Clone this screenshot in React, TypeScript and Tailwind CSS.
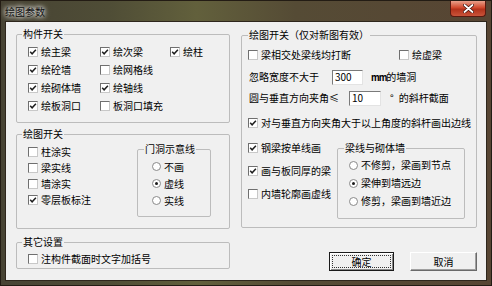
import React from "react";

type Item = { label: string; checked?: boolean };

const Check = ({ label, checked = false }: Item) => (
  <div className="flex items-center gap-[3px] whitespace-nowrap">
    <span className="flex h-[10px] w-[10px] shrink-0 items-center justify-center border border-t-[#6f6f6f] border-l-[#6f6f6f] border-r-[#c8c8c8] border-b-[#c8c8c8] bg-white">
      {checked && (
        <svg width="8" height="8" viewBox="0 0 8 8">
          <path d="M1.2 3.8 L3.1 5.8 L6.9 1.8" fill="none" stroke="#1e1e1e" strokeWidth="1.5" />
        </svg>
      )}
    </span>
    <span>{label}</span>
  </div>
);

const Radio = ({ label, checked = false }: Item) => (
  <div className="flex items-center gap-[3px] whitespace-nowrap">
    <span className="flex h-[9px] w-[9px] shrink-0 items-center justify-center rounded-full border border-[#8a8a8a] bg-white">
      {checked && <span className="h-[3px] w-[3px] rounded-full bg-[#1a1a1a]" />}
    </span>
    <span>{label}</span>
  </div>
);

const Group = ({
  title,
  className,
  legendClass = "ml-[5px]",
  children,
}: {
  title: string;
  className?: string;
  legendClass?: string;
  children: React.ReactNode;
}) => (
  <fieldset className={`rounded-[2px] border border-[#bcbcbc] ${className ?? ""}`}>
    <legend className={`px-[1px] leading-[10px] ${legendClass}`}>{title}</legend>
    {children}
  </fieldset>
);

export default function App() {
  return (
    <div className="flex h-[286px] w-[492px] flex-col border border-[#231c14] bg-[linear-gradient(90deg,#474334_0%,#4f4d36_22%,#62603c_40%,#554b35_60%,#574533_100%)] text-[10px] leading-[10px] text-black font-['Noto_Sans_CJK_SC',sans-serif]">
      {/* title bar */}
      <div className="flex h-[20px] shrink-0 items-start">
        <span className="mt-[6px] ml-[4px] [text-shadow:0_0_6px_#fff,0_0_4px_#fff] text-[#111]">绘图参数</span>
        <div className="mr-[5px] ml-auto flex h-[16px] w-[36px] items-center justify-center rounded-b-[4px] border border-t-0 border-[#5a1a10] bg-[linear-gradient(180deg,#e9a08a_0%,#d0482c_45%,#b3321b_55%,#c9543a_100%)]">
          <svg width="11" height="9" viewBox="0 0 11 9">
            <path d="M1.5 1 L9.5 8 M9.5 1 L1.5 8" stroke="#3a0d06" strokeWidth="3.2" strokeLinecap="round" />
            <path d="M1.5 1 L9.5 8 M9.5 1 L1.5 8" stroke="#ffffff" strokeWidth="1.8" strokeLinecap="round" />
          </svg>
        </div>
      </div>

      {/* client area */}
      <div className="mx-[4px] flex h-[260px] shrink-0 border border-[#2e261c] bg-[#f0f0f0]">
        {/* left column */}
        <div className="ml-[10px] flex w-[214px] flex-col">
          <Group title="构件开关" className="mt-[7px] w-[214px]">
            <div className="grid grid-cols-[72px_70px_auto] auto-rows-[18px] items-center pt-[4px] pb-[7px] pl-[11px]">
              <Check label="绘主梁" checked />
              <Check label="绘次梁" checked />
              <Check label="绘柱" checked />
              <Check label="绘砼墙" checked />
              <Check label="绘网格线" />
              <span />
              <Check label="绘砌体墙" checked />
              <Check label="绘轴线" checked />
              <span />
              <Check label="绘板洞口" checked />
              <Check label="板洞口填充" />
            </div>
          </Group>

          <Group title="绘图开关" className="mt-[6px] w-[214px]">
            <div className="flex pt-[5px] pb-[11px]">
              <div className="flex w-[120px] flex-col pl-[11px]">
                {[
                  { label: "柱涂实" },
                  { label: "梁实线" },
                  { label: "墙涂实" },
                  { label: "零层板标注", checked: true },
                ].map((c) => (
                  <div key={c.label} className="flex h-[16px] items-center">
                    <Check {...c} />
                  </div>
                ))}
              </div>
              <Group title="门洞示意线" className="w-[74px]" legendClass="ml-[6px]">
                <div className="flex flex-col pt-[4px] pb-[7px] pl-[14px]">
                  {[{ label: "不画" }, { label: "虚线", checked: true }, { label: "实线" }].map((r) => (
                    <div key={r.label} className="flex h-[17px] items-center">
                      <Radio {...r} />
                    </div>
                  ))}
                </div>
              </Group>
            </div>
          </Group>

          <Group title="其它设置" className="mt-[8px] w-[214px]">
            <div className="flex h-[16px] items-center pl-[11px] mt-[4px] mb-[1px]">
              <Check label="注构件截面时文字加括号" />
            </div>
          </Group>
        </div>

        {/* right column */}
        <div className="ml-[11px] flex w-[236px] flex-col">
          <Group title="绘图开关（仅对新图有效）" className="mt-[8px] w-[236px]" legendClass="ml-[6px]">
            <div className="flex flex-col pt-[5px] pb-[8px] pl-[6px]">
              <div className="flex h-[20px] items-center">
                <div className="w-[151px]">
                  <Check label="梁相交处梁线均打断" />
                </div>
                <Check label="绘虚梁" />
              </div>
              <div className="mt-[2px] flex h-[20px] items-center pl-[1px]">
                <span className="w-[83px]">忽略宽度不大于</span>
                <div className="flex h-[15px] w-[31px] items-center border border-t-[#7a7a7a] border-l-[#7a7a7a] border-r-[#e3e3e3] border-b-[#e3e3e3] bg-white pl-[2px]">
                  300
                </div>
                <span className="ml-[8px]">
                  <span className="font-bold tracking-[-1px] text-[9px]">mm</span>的墙洞
                </span>
              </div>
              <div className="mt-[1px] flex h-[20px] items-center pl-[1px]">
                <span className="w-[100px]">圆与垂直方向夹角≤</span>
                <div className="flex h-[15px] w-[32px] items-center border border-t-[#7a7a7a] border-l-[#7a7a7a] border-r-[#e3e3e3] border-b-[#e3e3e3] bg-white pl-[2px]">
                  10
                </div>
                <span className="ml-[9px]">°</span>
                <span className="ml-[5px]">的斜杆截面</span>
              </div>
              <div className="mt-[5px] flex h-[20px] items-center">
                <Check label="对与垂直方向夹角大于以上角度的斜杆画出边线" checked />
              </div>
              <div className="mt-[3px] flex">
                <div className="flex w-[89px] flex-col">
                  {[
                    { label: "钢梁按单线画", checked: true },
                    { label: "画与板同厚的梁", checked: true },
                    { label: "内墙轮廓画虚线" },
                  ].map((c) => (
                    <div key={c.label} className="flex h-[23px] items-center">
                      <Check {...c} />
                    </div>
                  ))}
                </div>
                <Group title="梁线与砌体墙" className="mt-[7px] w-[128px]" legendClass="ml-[6px]">
                  <div className="flex flex-col pt-[3px] pb-[8px] pl-[11px]">
                    {[
                      { label: "不修剪，梁画到节点" },
                      { label: "梁伸到墙远边", checked: true },
                      { label: "修剪，梁画到墙近边" },
                    ].map((r) => (
                      <div key={r.label} className="flex h-[18px] items-center">
                        <Radio {...r} />
                      </div>
                    ))}
                  </div>
                </Group>
              </div>
            </div>
          </Group>

          <div className="mt-[24px] flex justify-end gap-[16px]">
            <button className="flex h-[19px] w-[65px] items-center justify-center border border-[#1a1a1a] bg-[#f0f0f0] p-[2px] shadow-[inset_1px_1px_0_#ffffff,inset_-1px_-1px_0_#8a8a8a]">
              <span className="flex h-full w-full items-center justify-center border border-dotted border-[#333]">
                确定
              </span>
            </button>
            <button className="flex h-[19px] w-[67px] items-center justify-center border border-t-[#ffffff] border-l-[#ffffff] border-r-[#6a6a6a] border-b-[#6a6a6a] bg-[#f0f0f0] shadow-[inset_-1px_-1px_0_#a0a0a0]">
              取消
            </button>
          </div>
        </div>
      </div>
    </div>
  );
}
